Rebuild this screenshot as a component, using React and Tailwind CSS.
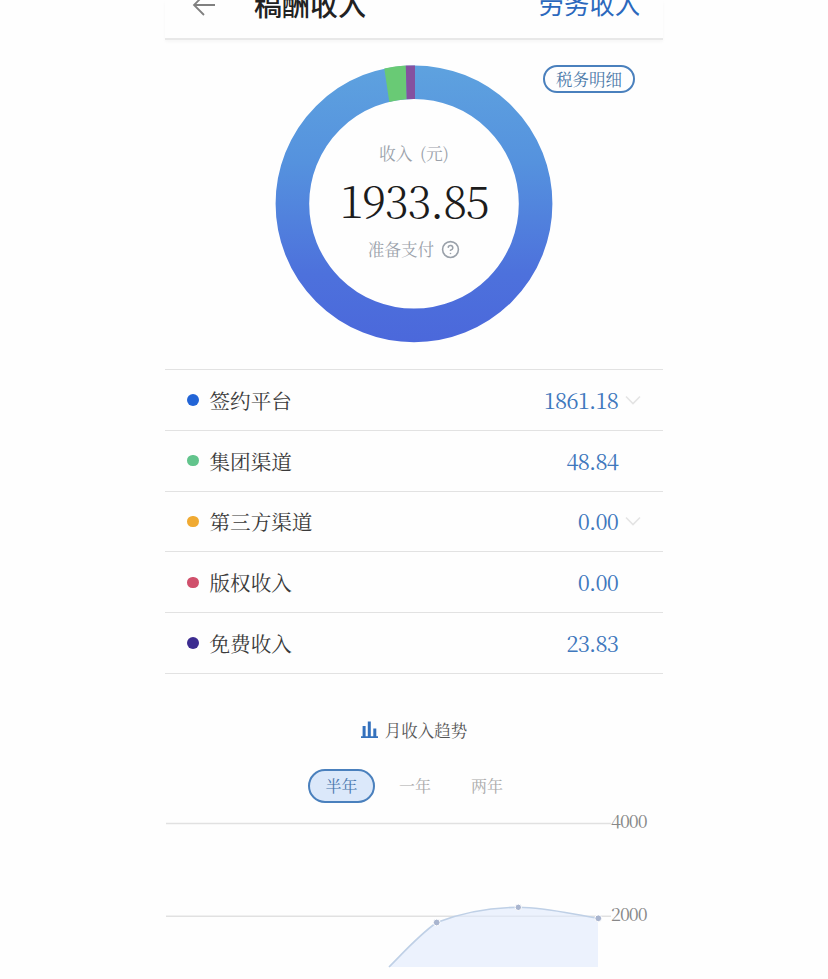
import React from 'react';
import { CircleHelp } from 'lucide-react';

const rows = [
  { name: '签约平台', value: '1861.18', dot: 'bg-[#2264d6]', more: true },
  { name: '集团渠道', value: '48.84', dot: 'bg-[#62c48c]' },
  { name: '第三方渠道', value: '0.00', dot: 'bg-[#f0aa32]', more: true },
  { name: '版权收入', value: '0.00', dot: 'bg-[#d0506c]' },
  { name: '免费收入', value: '23.83', dot: 'bg-[#3c2c90]' },
];

const Header = () => (
  <header className="flex h-10 shrink-0 items-end border-b-2 border-[#e8e8e8] pr-[23px] pl-[27px] font-['Noto_Sans_CJK_SC',sans-serif] shadow-[0_2px_3px_rgba(0,0,0,0.03)]">
    <svg className="mb-[22px] h-[22px] w-6 shrink-0" viewBox="0 0 24 22" fill="none" stroke="#808080" strokeWidth="1.8">
      <path d="M23 11H2M12 1L2 11L12 21" />
    </svg>
    <h1 className="mb-[18px] ml-[38px] text-[28px] leading-[32px] font-medium whitespace-nowrap text-[#222]">稿酬收入</h1>
    <span className="mb-[20px] ml-auto text-[25.3px] leading-[30px] whitespace-nowrap text-[#2b68bd]">劳务收入</span>
  </header>
);

const Donut = () => (
  <div className="relative h-[278px] w-[278px]">
    <svg className="h-full w-full" viewBox="0 0 278 278">
      <defs>
        <linearGradient id="ring" x1="0" y1="0" x2="0" y2="278" gradientUnits="userSpaceOnUse">
          <stop offset="0" stopColor="#5ea2df" />
          <stop offset="0.35" stopColor="#5592de" />
          <stop offset="0.75" stopColor="#4d71dc" />
          <stop offset="1" stopColor="#4b68db" />
        </linearGradient>
      </defs>
      <circle cx="139" cy="138.8" r="121.6" fill="none" stroke="url(#ring)" strokeWidth="33.6" />
      <path d="M109.3 3.6A138.4 138.4 0 0 1 130.8 .6L131.7 34.2A104.8 104.8 0 0 0 114.3 37Z" fill="#69ca75" />
      <path d="M130.8 .6A138.4 138.4 0 0 1 140 .4V34A104.8 104.8 0 0 0 131.7 34.2Z" fill="#85519f" />
    </svg>
    <div className="absolute inset-0 flex flex-col items-center text-[#9aa1aa]">
      <p className="mt-[76px] text-[16.8px] leading-6 whitespace-pre [word-spacing:3px]">收入 (元)</p>
      <p className="mt-[6px] text-[44px] leading-[56px] font-light tracking-[-1.2px] text-[#1c1c1c]">1933.85</p>
      <div className="mt-[10px] flex items-center gap-[7px]">
        <span className="text-[16.6px] leading-6">准备支付</span>
        <CircleHelp size={19} strokeWidth={2} />
      </div>
    </div>
  </div>
);

const Row = ({ name, value, dot, more }) => (
  <li className="flex h-[60.8px] items-center border-b border-[#e2e2e2] pr-[22px] pl-[22px]">
    <span className={`h-[11.5px] w-[11.5px] rounded-full ${dot}`} />
    <span className="ml-[11px] text-[20.6px] leading-7 text-[#3a3a3a]">{name}</span>
    <span className="ml-auto text-[22px] leading-7 tracking-[-0.8px] text-[#3f78bd]">{value}</span>
    <span className="ml-[7px] flex w-4">
      {more && (
        <svg className="h-[10px] w-4" viewBox="0 0 16 10" fill="none" stroke="#e4e4e4" strokeWidth="1.6">
          <path d="M1 1.5L8 8.5L15 1.5" />
        </svg>
      )}
    </span>
  </li>
);

const TrendChart = () => (
  <div className="mt-[5px] flex">
    <svg className="h-[160px] w-[446px] shrink-0" viewBox="0 0 446 160">
      <path d="M1 15.5H446M1 108.3H446" stroke="#e1e1e1" strokeWidth="1.6" />
      <path d="M224 159C239 144 254 127 271.7 114.5C296 105 325 99.5 353.3 99.3C382 99.5 405 106 433 110.3V159Z" fill="#dfeafb" fillOpacity="0.6" />
      <path d="M224 159C239 144 254 127 271.7 114.5C296 105 325 99.5 353.3 99.3C382 99.5 405 106 433 110.3" fill="none" stroke="#bfd0e6" strokeWidth="1.6" />
      <g fill="#a9b5cf" stroke="#fff" strokeWidth="1">
        <circle cx="271.7" cy="114.5" r="3.4" />
        <circle cx="353.3" cy="99.3" r="3.2" />
        <circle cx="433.3" cy="110.3" r="3.4" />
      </g>
    </svg>
    <div className="flex flex-col gap-[69px] text-[18px] leading-6 tracking-[-1px] text-[#888]">
      <span>4000</span>
      <span>2000</span>
    </div>
  </div>
);

const App = () => {
  return (
    <div className="h-[979px] overflow-hidden bg-[#fefefe] font-['Noto_Serif_CJK_SC','Noto_Sans_CJK_SC',serif]">
      <div className="mx-auto flex w-[498px] flex-col">
        <Header />

        {/* 收入环形图 */}
        <section className="grid h-[330px] grid-cols-[110px_278px_110px] border-b border-[#e2e2e2] pt-[25px]">
          <div />
          <Donut />
          <button className="-ml-[10px] flex h-[28px] w-[92px] items-center justify-center rounded-full border-2 border-[#4a80bd] text-[16.5px] whitespace-nowrap text-[#4a78a8]">
            税务明细
          </button>
        </section>

        <ul>
          {rows.map((row) => (
            <Row key={row.name} {...row} />
          ))}
        </ul>

        {/* 月收入趋势 */}
        <section>
          <h2 className="mt-[44px] flex h-6 items-center justify-center gap-[7px] text-[16.5px] text-[#555]">
            <svg className="h-[17px] w-[17px]" viewBox="0 0 17 17" fill="#3471bd">
              <path d="M0 15.2H17V17H0ZM1.6 5H4.6V16H1.6ZM6.8 .5H9.8V16H6.8ZM12.3 7.5H15.3V16H12.3Z" />
            </svg>
            月收入趋势
          </h2>
          <div className="mt-[27px] flex h-[34px] items-center pl-[143px] text-[16px] text-[#aaa]">
            <button className="flex h-[34px] w-[67px] items-center justify-center rounded-full border-2 border-[#4a80bd] bg-[#dbe8fa] text-[#4977ad]">
              半年
            </button>
            <button className="ml-[24px]">一年</button>
            <button className="ml-[40px]">两年</button>
          </div>
          <TrendChart />
        </section>
      </div>
    </div>
  );
};

export default App;
